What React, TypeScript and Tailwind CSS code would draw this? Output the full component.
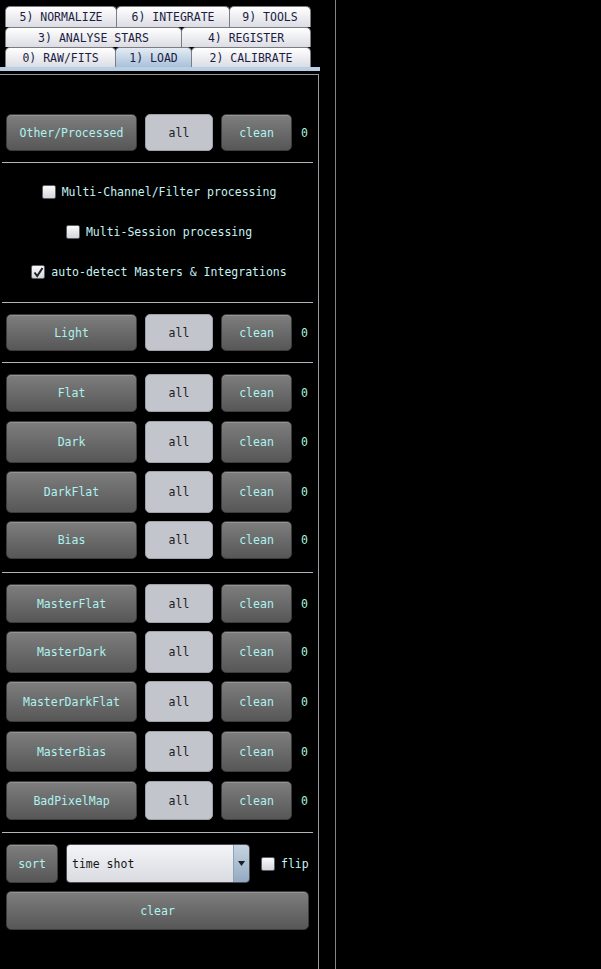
import React from 'react';

const mono = "font-['DejaVu_Sans_Mono',monospace] text-[11.5px]";

const Tab = ({ label, w, active }: { label: string; w: string; active?: boolean }) => (
  <div
    className={`${w} h-full flex items-center justify-center pt-[2px] rounded-t-[5px] border border-b-0 border-[#7c7c84] -ml-px first:ml-0 text-[#1c1c44] ${
      active ? 'bg-gradient-to-b from-[#e4ecf4] to-[#a9c1d9]' : 'bg-gradient-to-b from-[#ffffff] to-[#dcdde3]'
    }`}
  >
    {label}
  </div>
);

const DarkBtn = ({ label, className }: { label: string; className: string }) => (
  <div
    className={`${className} h-full flex items-center justify-center pt-[2px] rounded-[5px] border border-[#3c3c3c] bg-gradient-to-b from-[#7e7e7e] to-[#575757] text-[#aef3ef] shadow-[inset_0_1px_0_rgba(255,255,255,0.18)]`}
  >
    {label}
  </div>
);

const AllBtn = () => (
  <div className="w-[68px] ml-2 h-full flex items-center justify-center pt-[2px] rounded-[5px] border border-[#9ea0a8] bg-[#c3c5cc] text-[#1a1a1a]">
    all
  </div>
);

const Row = ({ label, h, mt }: { label: string; h: string; mt: string }) => (
  <div className={`${h} ${mt} flex items-stretch pl-[6px]`}>
    <DarkBtn label={label} className="w-[131px]" />
    <AllBtn />
    <DarkBtn label="clean" className="w-[71px] ml-2" />
    <div className="ml-[9px] pt-[2px] flex items-center text-[#a6f3de]">0</div>
  </div>
);

const Sep = ({ mt }: { mt: string }) => <div className={`${mt} ml-[2px] w-[311px] h-px bg-[#b4b4bc]`} />;

const Check = ({ checked }: { checked?: boolean }) => (
  <div className="w-[14px] h-[14px] rounded-[2px] border border-[#5c5c64] bg-gradient-to-b from-[#fafafa] to-[#d4d6dc] flex items-center justify-center">
    {checked && (
      <svg width="11" height="11" viewBox="0 0 11 11">
        <path d="M1.5 5.5 L4.2 9 L9.5 1" fill="none" stroke="#202028" strokeWidth="2" />
      </svg>
    )}
  </div>
);

const CheckRow = ({ label, checked }: { label: string; checked?: boolean }) => (
  <div className="h-[40px] flex items-center justify-center gap-[6px]">
    <Check checked={checked} />
    <span className="pt-[1px] text-[#c6f3f3]">{label}</span>
  </div>
);

export default function App() {
  return (
    <div className={`w-[601px] h-[969px] bg-black overflow-hidden ${mono}`}>
      <div className="w-[336px] h-full border-r border-[#84848c]">
        <div className="pt-[6px] pl-[5px]">
          <div className="flex h-[21px]">
            <Tab label="5) NORMALIZE" w="w-[112px]" />
            <Tab label="6) INTEGRATE" w="w-[114px]" />
            <Tab label="9) TOOLS" w="w-[82px]" />
          </div>
          <div className="flex h-[20px]">
            <Tab label="3) ANALYSE STARS" w="w-[177px]" />
            <Tab label="4) REGISTER" w="w-[130px]" />
          </div>
          <div className="flex h-[20px]">
            <Tab label="0) RAW/FITS" w="w-[111px]" />
            <Tab label="1) LOAD" w="w-[77px]" active />
            <Tab label="2) CALIBRATE" w="w-[120px]" />
          </div>
        </div>
        <div className="w-[320px] h-[4px] bg-[#b8cfe6]" />
        <div className="mt-[3px] w-[319px] h-[895px] border-t border-r border-[#9a9aa2]">
          <Row label="Other/Processed" h="h-[37px]" mt="mt-[39px]" />
          <Sep mt="mt-[11px]" />
          <div className="mt-[9px]">
            <CheckRow label="Multi-Channel/Filter processing" />
            <CheckRow label="Multi-Session processing" />
            <CheckRow label="auto-detect Masters & Integrations" checked />
          </div>
          <Sep mt="mt-[10px]" />
          <Row label="Light" h="h-[37px]" mt="mt-[11px]" />
          <Sep mt="mt-[11px]" />
          <Row label="Flat" h="h-[38px]" mt="mt-[11px]" />
          <Row label="Dark" h="h-[42px]" mt="mt-[9px]" />
          <Row label="DarkFlat" h="h-[42px]" mt="mt-[8px]" />
          <Row label="Bias" h="h-[38px]" mt="mt-[8px]" />
          <Sep mt="mt-[13px]" />
          <Row label="MasterFlat" h="h-[39px]" mt="mt-[11px]" />
          <Row label="MasterDark" h="h-[42px]" mt="mt-[8px]" />
          <Row label="MasterDarkFlat" h="h-[41px]" mt="mt-[8px]" />
          <Row label="MasterBias" h="h-[41px]" mt="mt-[9px]" />
          <Row label="BadPixelMap" h="h-[39px]" mt="mt-[9px]" />
          <Sep mt="mt-[12px]" />
          <div className="mt-[11px] h-[39px] flex items-stretch pl-[6px]">
            <DarkBtn label="sort" className="w-[52px]" />
            <div className="ml-2 w-[184px] h-full flex rounded-[4px] border border-[#4c4c54] overflow-hidden">
              <div className="flex-1 flex items-center pl-[5px] pt-[2px] bg-gradient-to-b from-[#f4f4f8] to-[#d9dbe1] text-[#141414]">
                time shot
              </div>
              <div className="w-[16px] flex items-center justify-center border-l border-[#8ea2b8] bg-gradient-to-b from-[#c6d4e2] to-[#94aac2]">
                <svg width="7" height="5" viewBox="0 0 7 5">
                  <path d="M0 0 H7 L3.5 5 Z" fill="#1c1c24" />
                </svg>
              </div>
            </div>
            <div className="ml-[11px] flex items-center gap-[6px]">
              <Check />
              <span className="pt-[2px] text-[#c6f3f3]">flip</span>
            </div>
          </div>
          <div className="mt-[8px] h-[39px] pl-[6px]">
            <DarkBtn label="clear" className="w-[303px]" />
          </div>
        </div>
      </div>
    </div>
  );
}
